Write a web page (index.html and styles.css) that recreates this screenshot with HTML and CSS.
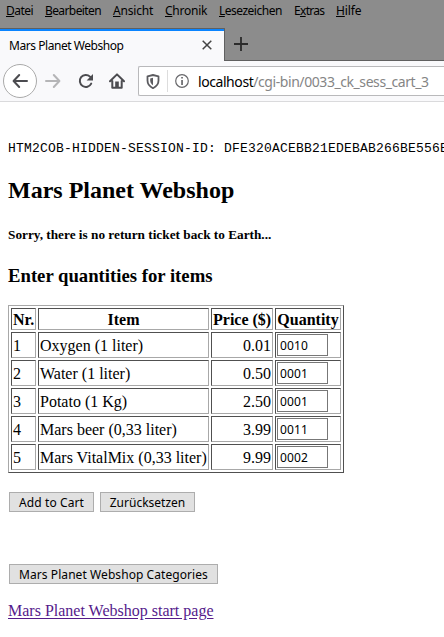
FILE: index.html
```html
<!DOCTYPE html>
<html lang="de">
<head>
<meta charset="utf-8">
<title>Mars Planet Webshop</title>
<link rel="stylesheet" href="styles.css">
</head>
<body>
<header class="chrome">
  <nav class="menubar">
    <span class="m-datei"><u>D</u>atei</span><span class="m-bearbeiten"><u>B</u>earbeiten</span><span class="m-ansicht"><u>A</u>nsicht</span><span class="m-chronik"><u>C</u>hronik</span><span class="m-lesezeichen"><u>L</u>esezeichen</span><span class="m-extras">E<u>x</u>tras</span><span class="m-hilfe"><u>H</u>ilfe</span>
  </nav>
  <div class="tabs">
    <div class="tab">
      <span class="tab-title">Mars Planet Webshop</span>
      <svg class="close" width="10" height="10" viewBox="0 0 10 10"><path d="M.7.7l8.6 8.6M9.3.7L.7 9.3" stroke="#444" stroke-width="1.5"/></svg>
    </div>
    <svg class="plus" width="14" height="14" viewBox="0 0 14 14"><path d="M7 0v14M0 7h14" stroke="#2b2b2b" stroke-width="1.8"/></svg>
  </div>
  <div class="toolbar">
    <span class="back"><svg width="16" height="16" viewBox="0 0 16 16"><path d="M15 8H2M7.2 2L1.6 8l5.6 6" fill="none" stroke="#4c4c50" stroke-width="2" stroke-linecap="round" stroke-linejoin="round"/></svg></span>
    <svg class="forward" width="16" height="16" viewBox="0 0 16 16"><path d="M1 8h13M8.8 2l5.6 6-5.6 6" fill="none" stroke="#b5b5b7" stroke-width="2" stroke-linecap="round" stroke-linejoin="round"/></svg>
    <svg class="reload" width="16" height="16" viewBox="0 0 16 16"><path d="M13.2 10.6A6 6 0 1 1 12 3.6L13.4 5" fill="none" stroke="#4c4c50" stroke-width="2" stroke-linecap="round"/><path d="M15 1v6.500H8.600z" fill="#4c4c50"/></svg>
    <svg class="home" width="16" height="16" viewBox="0 0 16 16"><path d="M1 8.300L8 1.400l7 6.900M3.300 8v6.700h9.400V8" fill="none" stroke="#4c4c50" stroke-width="2" stroke-linecap="round" stroke-linejoin="round"/><path d="M6.200 8.500h3.600V15H6.200z" fill="#4c4c50"/></svg>
    <div class="urlbar">
      <svg class="shield" width="14" height="15" viewBox="0 0 14 15"><path d="M7 1L12.500 2.300v4.200c0 3.300-2 6-5.500 7.700-3.500-1.700-5.500-4.400-5.500-7.700V2.300z" fill="none" stroke="#5c5c60" stroke-width="1.800" stroke-linejoin="round"/><path d="M7 3.800v7.400C5 9.800 4.200 8.300 4.200 6.500V4.400z" fill="#5c5c60"/></svg>
      <span class="divider"></span>
      <svg class="info" width="14" height="14" viewBox="0 0 14 14"><circle cx="7" cy="7" r="6.300" fill="none" stroke="#68686b" stroke-width="1.200"/><path d="M6.200 3h1.700v1.600H6.200zM6.200 6h1.700v5H6.200z" fill="#68686b"/></svg>
      <span class="url">localhost<span class="path">/cgi-bin/0033_ck_sess_cart_3</span></span>
    </div>
  </div>
</header>
<main>
  <pre>HTM2COB-HIDDEN-SESSION-ID: DFE320ACEBB21EDEBAB266BE556E</pre>
  <h2>Mars Planet Webshop</h2>
  <h5>Sorry, there is no return ticket back to Earth...</h5>
  <h3>Enter quantities for items</h3>
  <table>
    <colgroup><col class="c-nr"><col class="c-item"><col class="c-price"><col class="c-qty"></colgroup>
    <tr><th>Nr.</th><th>Item</th><th>Price ($)</th><th>Quantity</th></tr>
    <tr><td>1</td><td>Oxygen (1 liter)</td><td class="price">0.01</td><td><input value="0010"></td></tr>
    <tr><td>2</td><td>Water (1 liter)</td><td class="price">0.50</td><td><input value="0001"></td></tr>
    <tr><td>3</td><td>Potato (1 Kg)</td><td class="price">2.50</td><td><input value="0001"></td></tr>
    <tr><td>4</td><td>Mars beer (0,33 liter)</td><td class="price">3.99</td><td><input value="0011"></td></tr>
    <tr><td>5</td><td>Mars VitalMix (0,33 liter)</td><td class="price">9.99</td><td><input value="0002"></td></tr>
  </table>
  <div class="actions"><button class="b-add">Add to Cart</button><button class="b-reset">Zurücksetzen</button></div>
  <div class="categories"><button class="b-cat">Mars Planet Webshop Categories</button></div>
  <a href="#">Mars Planet Webshop start page</a>
</main>
</body>
</html>
```
FILE: styles.css
```css
* { box-sizing: border-box; }
body { margin: 0; width: 444px; height: 637px; overflow: hidden; background: #fff; color: #000; font: 16px/18px "Liberation Serif", serif; }
svg { display: block; flex: none; }
.chrome { height: 102px; font-family: "Noto Sans", sans-serif; background: #8c8c8c; }
.menubar { display: flex; gap: 12px; height: 28px; padding-left: 6px; font-size: 12px; line-height: 21px; white-space: nowrap; }
.menubar span { flex: none; }
.menubar u { text-underline-offset: 1px; text-decoration-thickness: 1px; }
.m-datei { width: 27px; letter-spacing: -.5px; }
.m-bearbeiten { width: 56px; letter-spacing: -.6px; }
.m-ansicht { width: 40px; letter-spacing: -.2px; }
.m-chronik { width: 42px; letter-spacing: -.25px; }
.m-lesezeichen { width: 63px; letter-spacing: -.5px; }
.m-extras { width: 30px; letter-spacing: -.7px; }
.m-hilfe { width: 25px; letter-spacing: -.1px; }
.tabs { display: flex; height: 33px; border-bottom: 1px solid #606060; }
.tab { display: flex; align-items: center; justify-content: space-between; width: 225px; height: 33px; padding: 0 12px 0 9px; background: #f9f9fb; border-top: 1px solid #606060; border-right: 1px solid #606060; box-shadow: inset 0 2px #0a84ff; }
.tab-title { font-size: 12px; letter-spacing: -.45px; white-space: nowrap; margin-top: 2px; }
.plus { margin: 9px 0 0 9px; }
.toolbar { display: flex; align-items: center; height: 41px; padding-left: 3px; background: #f9f9fb; border-bottom: 1px solid #dadadc; }
.back { display: flex; align-items: center; justify-content: center; flex: none; width: 34px; height: 34px; border: 1px solid #aaa; border-radius: 50%; background: #fff; }
.forward { margin-left: 8px; }
.reload { margin-left: 17px; }
.home { margin-left: 15px; }
.urlbar { display: flex; align-items: center; flex: 1; height: 30px; margin-left: 13px; padding-left: 7px; border: 1px solid #b9b9bb; border-right: 0; border-radius: 2px 0 0 2px; background: #fff; }
.divider { width: 1px; height: 22px; margin: 0 7px; background: #ddd; }
.url { margin-left: 9px; margin-top: 2px; font-size: 14px; letter-spacing: -.43px; white-space: nowrap; }
.path { color: #858585; }
main { padding: 39px 8px 0; }
pre { margin: 0; height: 15px; font: 13px/15px "Liberation Mono", monospace; letter-spacing: .2px; white-space: pre; }
h2 { margin: 21px 0 0; font-size: 24px; line-height: 27px; }
h5 { margin: 23px 0 0; font-size: 13.280px; line-height: 15px; }
h3 { margin: 23px 0 0; font-size: 18.720px; line-height: 21px; }
table { margin-top: 19px; width: 336px; table-layout: fixed; border: 1px solid; border-color: #a8a8a8 #505050 #505050 #a8a8a8; border-spacing: 2px; border-collapse: separate; }
.c-nr { width: 25px; }
.c-item { width: 171px; }
.c-price { width: 62px; }
.c-qty { width: 66px; }
th, td { height: 26px; padding: 1px; border: 1px solid; border-color: #505050 #a8a8a8 #a8a8a8 #505050; white-space: nowrap; }
td:not(:last-child) { padding-top: 3px; }
th { height: 22px; padding-top: 2px; padding-bottom: 0; }
.price { text-align: right; }
input { display: block; width: 51px; height: 22px; margin: 0; padding: 0 2px; border: 1px solid #777; font: 12px "Noto Sans", sans-serif; letter-spacing: .1px; background: #fff; }
button { height: 20px; padding: 0; border: 1px solid #adadad; border-radius: 0; background: #e1e1e1; color: #000; font: 12px/17px "Noto Sans", sans-serif; white-space: nowrap; }
.actions { display: flex; gap: 6px; margin: 19px 0 0 1px; }
.b-add { width: 85px; letter-spacing: .1px; }
.b-reset { width: 95px; }
.categories { display: flex; margin: 52px 0 18px 1px; }
.b-cat { width: 209px; letter-spacing: .07px; }
a { color: #551a8b; text-underline-offset: 2px; }
```
